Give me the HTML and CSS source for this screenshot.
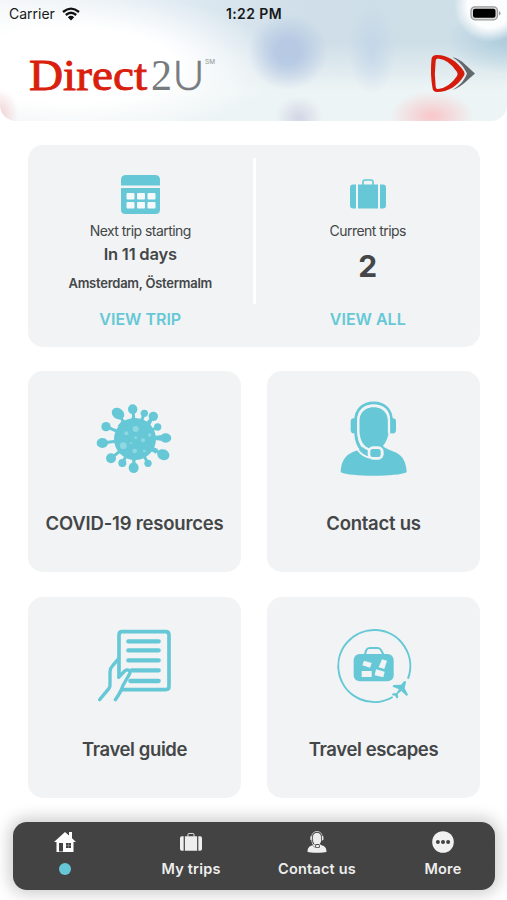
FILE: index.html
```html
<!DOCTYPE html>
<html lang="en">
<head>
  <meta charset="UTF-8">
  <meta name="viewport" content="width=device-width, initial-scale=1.0">
  <title>Direct2U</title>
  <link rel="stylesheet" href="styles.css">
</head>
<body>
  <!-- shared icons -->
  <svg class="defs" aria-hidden="true">
    <symbol id="suitcase" viewBox="0 0 36 30">
      <path d="M13 6V3q0-2 2-2h6q2 0 2 2v3" fill="none" stroke="currentColor" stroke-width="1.6"/>
      <path d="M6 5.500v24H3q-3 0-3-3v-18q0-3 3-3zM8 5.500h20v24H8zM30 5.500h3q3 0 3 3v18q0 3-3 3h-3z" fill="currentColor"/>
    </symbol>
    <symbol id="agent" viewBox="45 18 202 228">
      <path d="M116 152q-12-14-16-46c-2-40 10-69 46-69s48 29 46 69q-3 30-18 46c7 10 21 12 37 20 23 10 33 32 34 60-26 14-172 14-198 0 1-30 12-50 35-60 16-7 28-10 34-20z" fill="currentColor"/>
      <path d="M91 70h-5q-9 0-9 10v24q0 11 9 11h5zM199 70h5q9 0 9 10v24q0 11-9 11h-5z" fill="currentColor"/>
      <path class="cut" d="M84 122C88 156 105 182 134 188" fill="none" stroke-width="6"/>
      <path d="M199 115V78c0-37-24-54-53-54S92 41 92 78v26c0 42 14 66 43 73" fill="none" stroke="currentColor" stroke-width="9"/>
      <path class="cut" d="M192 115V78c0-31-18-46-46-46s-46 15-46 46v26c0 35 12 55 38 61" fill="none" stroke-width="7"/>
      <rect class="cut-fill" x="128" y="154" width="48" height="40" rx="16"/>
      <rect x="136" y="162" width="31" height="24" rx="7" fill="currentColor"/>
    </symbol>
  </svg>

  <div class="header">
    <div class="status">
      <div class="carrier">
        <span>Carrier</span>
        <svg width="18" height="14" viewBox="0 0 18 14">
          <path d="M1 5Q9-1.800 17 5M3.800 8Q9 3.600 14.200 8" fill="none" stroke="#111" stroke-width="2.300"/>
          <path d="M5.800 10.200Q9 7.500 12.200 10.200L9 13.500z" fill="#111"/>
        </svg>
      </div>
      <div class="time">1:22 PM</div>
      <svg class="battery" width="31" height="15" viewBox="0 0 31 15">
        <rect x="1" y=".8" width="26.500" height="13" rx="4" fill="#ddd" stroke="#999" stroke-width="1.300"/>
        <rect x="3" y="2.800" width="22.500" height="9" rx="2" fill="#000"/>
        <path d="M29 5q1.500 1 1.500 2.300T29 9.600z" fill="#999"/>
      </svg>
    </div>
    <div class="brand">
      <svg class="logo" width="190" height="64" viewBox="0 -10 190 64">
        <text class="logo-direct" x="0" y="36" textLength="118" lengthAdjust="spacingAndGlyphs">Direct</text>
        <text class="logo-2" x="122" y="36" textLength="21" lengthAdjust="spacingAndGlyphs">2</text>
        <text class="logo-u" x="143.500" y="36" textLength="32" lengthAdjust="spacingAndGlyphs">U</text>
        <text class="logo-sm" x="176" y="10" textLength="10" lengthAdjust="spacingAndGlyphs">SM</text>
      </svg>
      <svg width="46" height="40" viewBox="0 0 46 40">
        <path d="M22.500 3C33 6 37 13 45 19.500 37 26 33 32 22.500 36 31 31 35 25 37 19.500 34 13 30 8 22.500 3z" fill="#62676b"/>
        <path fill-rule="evenodd" d="M7 1C18 1 28 8 34 17.500q1 2 0 4C28 32 18 38 7 38q-4 0-4.500-4Q0 20 1.500 5 2 1 7 1zM8 4.500Q6 4.500 5.700 6.500 4 20 5.700 33q.3 2.200 2.300 2Q19 34 27 22q1.200-2 0-4Q19 5.500 8 4.500z" fill="#d51c0c"/>
      </svg>
    </div>
  </div>

  <div class="content">
    <div class="trips">
      <div class="trip">
        <svg class="trip-icon" width="39" height="39" viewBox="0 0 39 39">
          <path d="M0 10.500V5q0-5 5-5h29q5 0 5 5v5.500zM0 13h39v21.500q0 4.500-4.500 4.500h-30Q0 39 0 34.500z" fill="#66c8d6"/>
          <g fill="#f4fafb">
            <rect x="5.500" y="18" width="8" height="6.500" rx="1"/><rect x="16" y="18" width="8" height="6.500" rx="1"/><rect x="26.500" y="18" width="8" height="6.500" rx="1"/>
            <rect x="5.500" y="27" width="8" height="6.500" rx="1"/><rect x="16" y="27" width="8" height="6.500" rx="1"/><rect x="26.500" y="27" width="8" height="6.500" rx="1"/>
          </g>
        </svg>
        <div class="label">Next trip starting</div>
        <div class="days">In 11 days</div>
        <div class="places">Amsterdam, Östermalm</div>
        <div class="link">VIEW TRIP</div>
      </div>
      <div class="divider"></div>
      <div class="trip">
        <svg class="trip-icon case" width="36" height="30"><use href="#suitcase"/></svg>
        <div class="label">Current trips</div>
        <div class="count">2</div>
        <div class="link">VIEW ALL</div>
      </div>
    </div>

    <div class="grid">
      <div class="card">
        <svg class="card-icon" viewBox="0 0 300 270">
          <g stroke="#66c8d6" stroke-width="9" stroke-linecap="round">
            <path d="M150 132L98 54M150 132L144 42M150 132L178 54M150 132L206 62M150 132L218 96M150 132L242 129M150 132L236 180M150 132L189 205M150 132L146 220M150 132L112 204M150 132L78 190M150 132L50 144M150 132L62 94"/>
          </g>
          <g fill="#66c8d6">
            <circle cx="150" cy="132" r="63"/>
            <ellipse cx="99" cy="56" rx="20" ry="16" transform="rotate(35 99 56)"/>
            <ellipse cx="143" cy="43" rx="14" ry="15"/>
            <circle cx="178" cy="55" r="11"/>
            <circle cx="205" cy="64" r="14"/>
            <circle cx="218" cy="96" r="11"/>
            <ellipse cx="242" cy="129" rx="17" ry="14"/>
            <ellipse cx="235" cy="179" rx="19" ry="16" transform="rotate(25 235 179)"/>
            <circle cx="189" cy="205" r="11"/>
            <ellipse cx="146" cy="218" rx="15" ry="16"/>
            <circle cx="112" cy="204" r="12"/>
            <circle cx="78" cy="190" r="15"/>
            <ellipse cx="52" cy="144" rx="17" ry="15"/>
            <circle cx="63" cy="95" r="14"/>
            <path d="M98 92l15-17 12 2-13 22zM138 74l5-14 6 14zM185 86l11-15 6 6-8 17zM206 124l22-4v17l-22-3zM199 154l20 8-7 14-20-12zM140 190l5 16 9-16z"/>
          </g>
          <g fill="#8fd8e2">
            <circle cx="152" cy="102" r="9"/><circle cx="124" cy="115" r="6"/><circle cx="115" cy="152" r="10"/><circle cx="152" cy="128" r="4"/>
            <circle cx="174" cy="136" r="6"/><circle cx="149" cy="168" r="7"/><circle cx="194" cy="120" r="5"/><circle cx="178" cy="168" r="4"/><circle cx="139" cy="144" r="3"/>
          </g>
        </svg>
        <div class="card-title covid">COVID-19 resources</div>
      </div>
      <div class="card">
        <svg class="card-icon agent-icon" viewBox="-3 0 300 270"><use href="#agent" x="45" y="18" width="202" height="228"/></svg>
        <div class="card-title contact">Contact us</div>
      </div>
      <div class="card">
        <svg class="card-icon" viewBox="0 3 300 270" fill="none" stroke="#66c8d6" stroke-width="11" stroke-linecap="round" stroke-linejoin="round">
          <path d="M102 168V45q0-10 10-10h130q10 0 10 10v154q0 10-10 10H112"/>
          <path stroke-width="13" d="M130 64h91M130 91h91M130 121h91M140 151h81M136 183h85"/>
          <path stroke-width="10" d="M44 239l28-34q4-6 3-14v-36q0-10 8-18l16-19M101 172l18-19q8-6 14-1 4 4 0 11l-20 35q-4 16-22 41"/>
        </svg>
        <div class="card-title">Travel guide</div>
      </div>
      <div class="card">
        <svg class="card-icon" viewBox="-3 3 300 270">
          <path d="M203 231A108 108 0 1 1 249 176" fill="none" stroke="#66c8d6" stroke-width="6"/>
          <path d="M119 105l5-15q3-6 10-6h24q7 0 10 6l8 15" fill="none" stroke="#66c8d6" stroke-width="6"/>
          <rect x="86" y="102" width="120" height="82" rx="18" fill="#66c8d6"/>
          <path d="M117 122l23 7-5 14-23-7zM171 118l15 4-8 25-17-5zM110 153h30v18h-30zM153 148l26 7-4 17-26-6z" fill="#f1f3f4"/>
          <path d="M238 183q5-1 5 4l-4 18 10 19-4 4-16-15-11 9 2 9-4 5-6-9-10-2 4-5 10 0 8-12-19-8 2-5 23-1z" fill="#66c8d6"/>
        </svg>
        <div class="card-title">Travel escapes</div>
      </div>
    </div>
  </div>

  <div class="tabbar">
    <div class="tab">
      <svg width="22" height="22" viewBox="0 0 22 22">
        <path fill-rule="evenodd" d="M11 1l4 3.500V1h3v6.200L22 11h-2.500v10h-17V11H0zM5 12v8.500h4V12zM12 12v5h5v-5z" fill="#fff"/>
        <path d="M14.500 12v5M12 14.500h5" stroke="#999" stroke-width=".6"/>
      </svg>
      <div class="dot"></div>
    </div>
    <div class="tab">
      <svg width="22" height="22" viewBox="0 0 22 22"><use href="#suitcase" y="1.500" width="22" height="19"/></svg>
      <div class="tab-label">My trips</div>
    </div>
    <div class="tab">
      <svg class="agent-tab" width="22" height="22" viewBox="0 0 22 22"><use href="#agent" width="22" height="22"/></svg>
      <div class="tab-label">Contact us</div>
    </div>
    <div class="tab">
      <svg width="22" height="22" viewBox="0 0 22 22">
        <circle cx="11" cy="11" r="10.800" fill="#f2f2f2"/>
        <g fill="#434343"><circle cx="5.900" cy="11" r="2"/><circle cx="11" cy="11" r="2"/><circle cx="16.100" cy="11" r="2"/></g>
      </svg>
      <div class="tab-label">More</div>
    </div>
  </div>
</body>
</html>
```

FILE: styles.css
```css
* {
  box-sizing: border-box;
}
body {
  --cut: #f1f3f4;
  margin: 0;
  height: 900px;
  overflow: hidden;
  background: #fff;
  color: #444648;
  font-family: Inter, "Liberation Sans", sans-serif;
  white-space: nowrap;
}
svg {
  display: block;
}
.defs {
  position: absolute;
  width: 0;
  height: 0;
}
.header {
  height: 121px;
  border-radius: 0 0 16px 16px;
  background:
    radial-gradient(circle at 490px 6px, rgba(255, 255, 255, 0.95) 0 22px, rgba(255, 255, 255, 0) 36px),
    radial-gradient(ellipse 42px 25px at 432px 116px, rgba(250, 190, 193, 0.85), rgba(240, 225, 228, 0)),
    radial-gradient(ellipse 40px 38px at 288px 52px, rgba(180, 199, 227, 0.9) 30%, rgba(200, 215, 232, 0)),
    radial-gradient(ellipse 24px 22px at 299px 118px, rgba(208, 210, 228, 0.9), rgba(225, 230, 238, 0)),
    radial-gradient(ellipse 24px 45px at 372px 50px, rgba(190, 209, 232, 0.7), rgba(205, 220, 232, 0)),
    radial-gradient(ellipse 60px 34px at 507px 40px, rgba(165, 199, 218, 0.8), rgba(200, 220, 230, 0)),
    radial-gradient(ellipse 18px 26px at 0 115px, rgba(240, 200, 204, 0.8), rgba(245, 225, 228, 0)),
    radial-gradient(ellipse 210px 75px at 70px 65px, #fff 50%, rgba(255, 255, 255, 0)),
    linear-gradient(to bottom, rgba(238, 245, 246, 0) 35%, #edf4f5 75%),
    linear-gradient(to right, #f2f5f7, #dfeaf2 35%, #cfdee8 60%, #cddfe7);
}
.status {
  display: grid;
  grid-template-columns: 1fr auto 1fr;
  align-items: center;
  height: 27px;
  padding: 0 6px 0 9px;
  color: #16181a;
  font-size: 14px;
}
.carrier {
  display: flex;
  align-items: center;
  gap: 7px;
}
.time {
  margin-right: 2px;
  font-weight: 600;
  letter-spacing: 0.4px;
}
.battery {
  justify-self: end;
}
.brand {
  display: flex;
  justify-content: space-between;
  padding: 27px 31px 0 29px;
}
.logo {
  margin-top: -10px;
}
.logo-direct {
  font-family: "Liberation Serif", serif;
  font-size: 45px;
  fill: #d9200d;
  stroke: #d9200d;
  stroke-width: 0.9px;
}
.logo-2 {
  font-family: "Liberation Serif", serif;
  font-size: 45px;
  fill: #777b7e;
}
.logo-u {
  font-family: Lato, sans-serif;
  font-size: 42px;
  font-weight: 300;
  fill: #777b7e;
  stroke: #777b7e;
  stroke-width: 0.6px;
}
.logo-sm {
  font-size: 6px;
  fill: #8c9094;
}
.content {
  padding: 24px 27px 0 28px;
}
.trips {
  display: flex;
  height: 202px;
  border-radius: 15px;
  background: #f1f3f4;
}
.trip {
  flex: 1;
  display: flex;
  flex-direction: column;
  align-items: center;
  height: 202px;
}
.divider {
  width: 3px;
  height: 146px;
  margin-top: 13px;
  background: #fff;
}
.trip-icon {
  margin-top: 30px;
  color: #66c8d6;
}
.trip-icon.case {
  margin: 34px 0 5px;
}
.label {
  margin-top: 7px;
  line-height: 20px;
  font-size: 14px;
  letter-spacing: -0.55px;
}
.days {
  margin-top: 2px;
  line-height: 22px;
  font-size: 16.5px;
  font-weight: 600;
  letter-spacing: -0.2px;
}
.places {
  margin-top: 9px;
  line-height: 18px;
  font-size: 13px;
  font-weight: 600;
  letter-spacing: -0.25px;
}
.link {
  margin-top: auto;
  margin-bottom: 17px;
  line-height: 22px;
  font-size: 16px;
  font-weight: 600;
  letter-spacing: 0;
  color: #66c8d6;
}
.count {
  margin-top: 7px;
  line-height: 36px;
  font-size: 30px;
  font-weight: 700;
}
.grid {
  display: grid;
  grid-template-columns: 1fr 1fr;
  gap: 25px 26px;
  margin-top: 24px;
}
.card {
  display: flex;
  flex-direction: column;
  align-items: center;
  height: 201px;
  padding-top: 24px;
  border-radius: 15px;
  background: #f1f3f4;
}
.card-icon {
  width: 100px;
  height: 90px;
}
.agent-icon {
  color: #66c8d6;
}
.cut {
  stroke: var(--cut);
}
.cut-fill {
  fill: var(--cut);
}
.card-title {
  margin-top: 26px;
  line-height: 24px;
  font-size: 18.5px;
  font-weight: 600;
  letter-spacing: -0.4px;
}
.card-title.covid {
  letter-spacing: -0.2px;
}
.card-title.contact {
  letter-spacing: -0.25px;
}
.tabbar {
  --cut: #434343;
  display: flex;
  justify-content: space-between;
  height: 68px;
  margin: 24px 12px 0 13px;
  border-radius: 14px;
  background: #434343;
  box-shadow: 0 0 16px 4px rgba(0, 0, 0, 0.2);
  color: #eee;
}
.tab {
  display: flex;
  flex-direction: column;
  align-items: center;
  width: 104px;
  padding-top: 9px;
}
.tab-label {
  margin-top: 6px;
  line-height: 20px;
  font-size: 14.5px;
  font-weight: 600;
  letter-spacing: 0.2px;
}
.dot {
  width: 12px;
  height: 12px;
  margin-top: 10px;
  border-radius: 50%;
  background: #66c8d6;
}
```
